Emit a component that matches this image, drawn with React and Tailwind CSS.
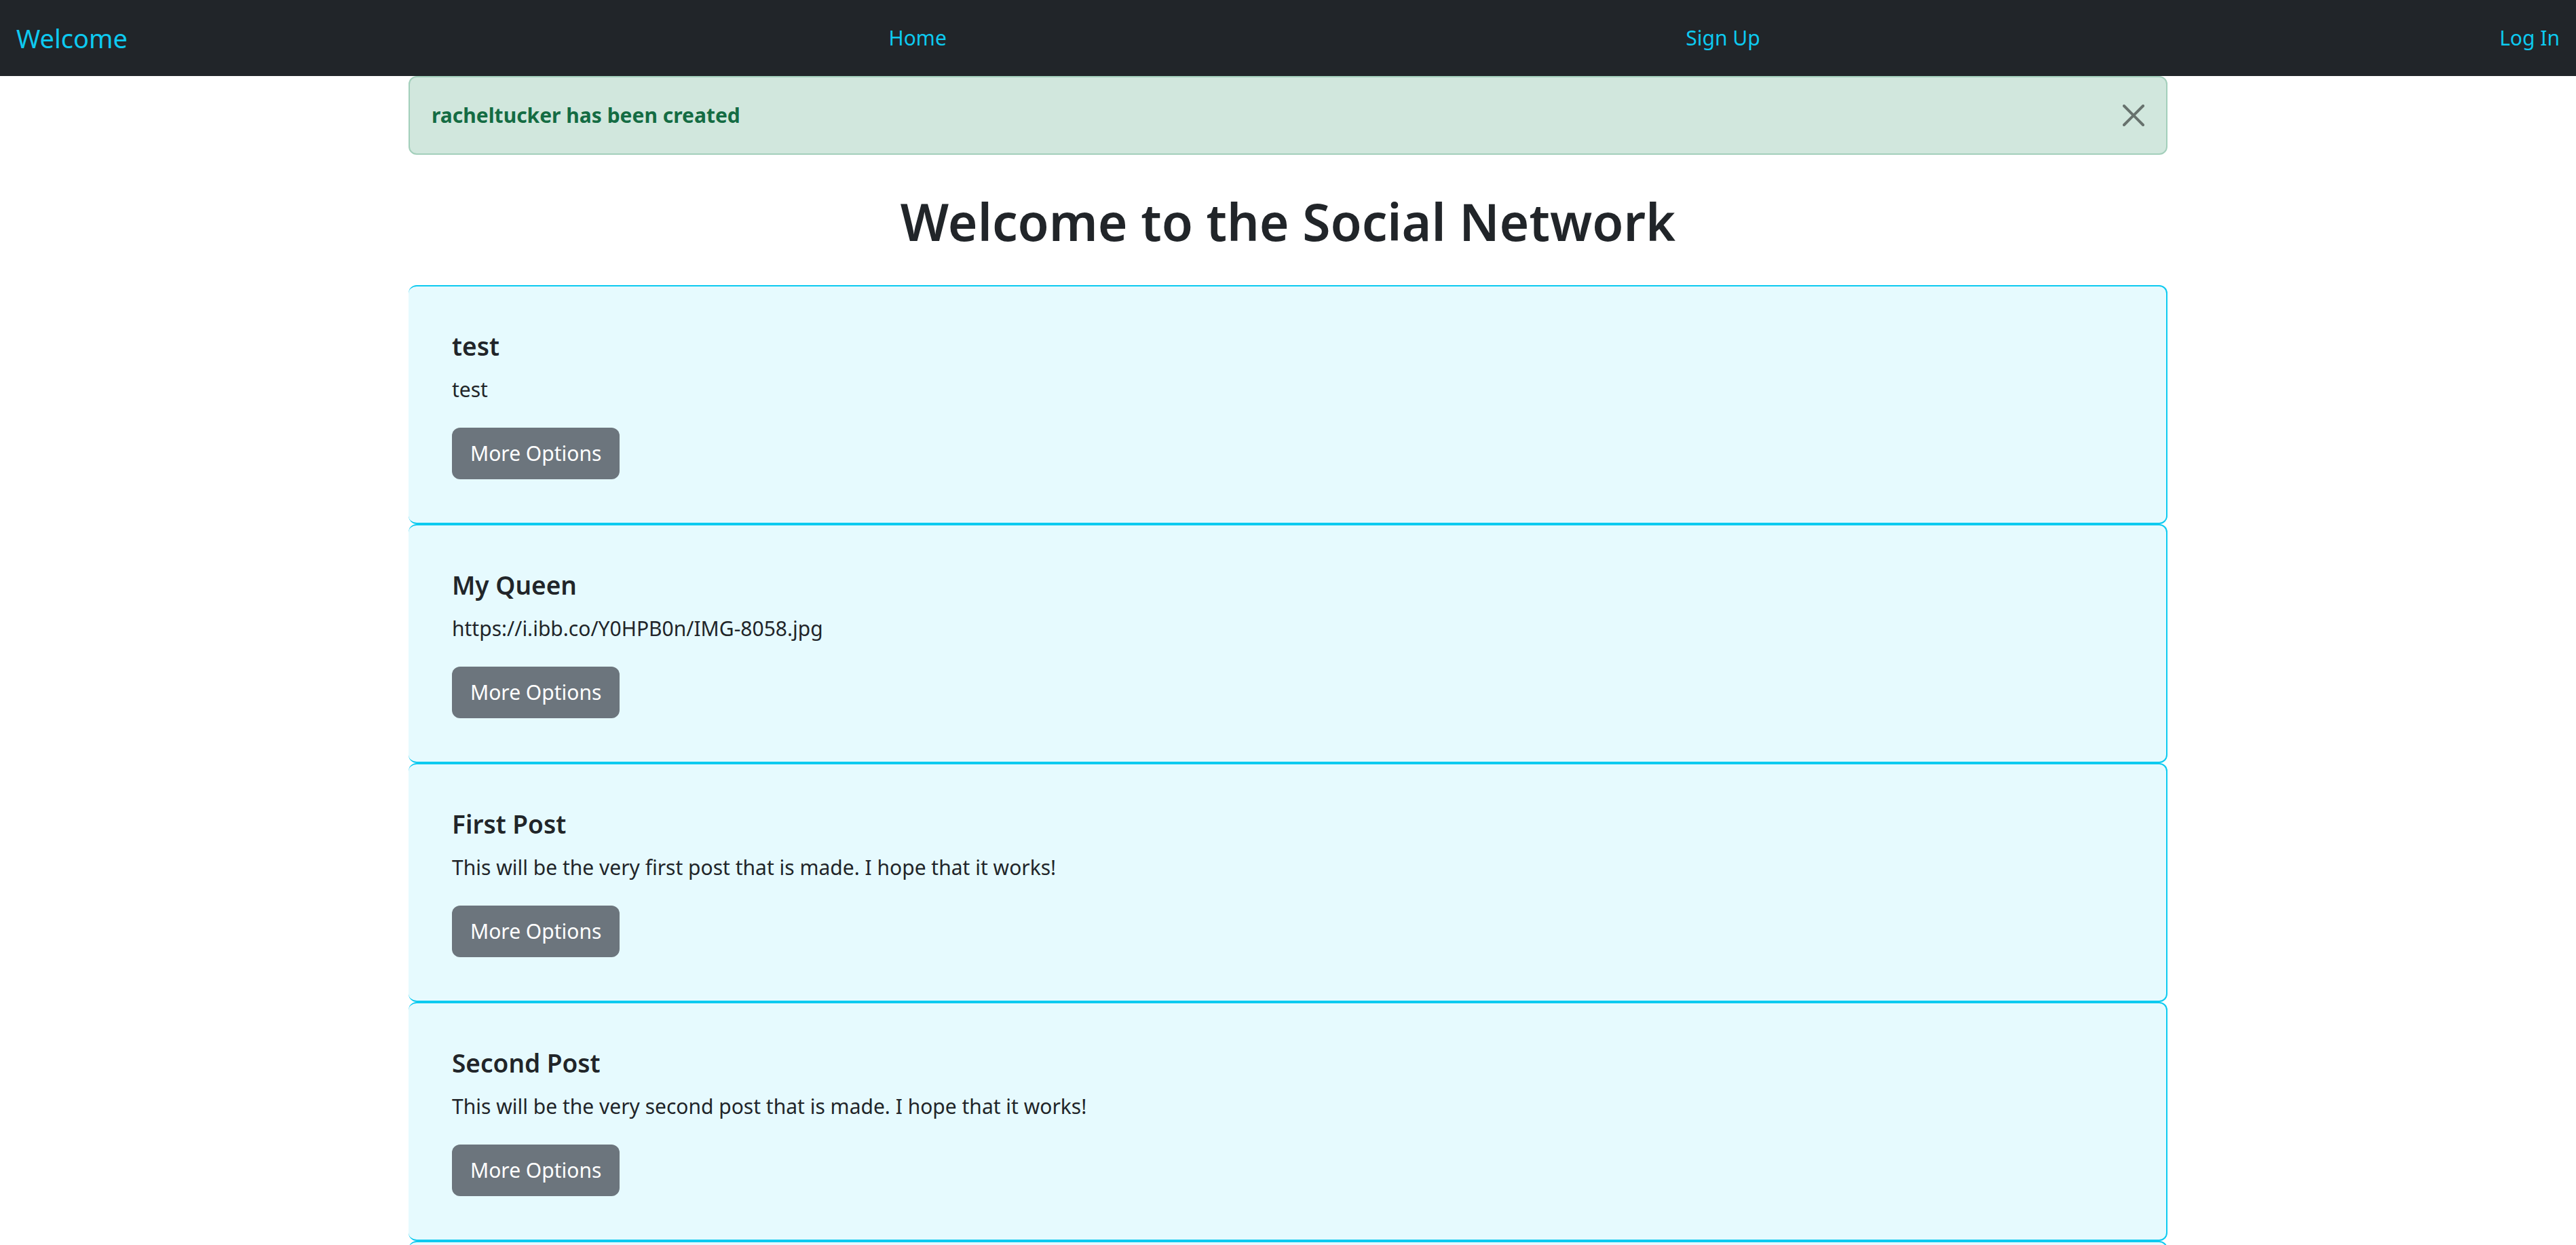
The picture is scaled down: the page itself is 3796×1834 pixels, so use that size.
import React, { useState } from "react";

const POSTS = [
  { title: "test", body: "test" },
  { title: "My Queen", body: "https://i.ibb.co/Y0HPB0n/IMG-8058.jpg" },
  { title: "First Post", body: "This will be the very first post that is made. I hope that it works!" },
  { title: "Second Post", body: "This will be the very second post that is made. I hope that it works!" },
];

const CARD = "rounded-xl border-2 border-l-0 border-[#0dcaf0] bg-[#e6fafe] p-16";

function NavBar() {
  return (
    <nav className="flex h-28 items-center justify-between bg-[#212529] px-6 text-[#0dcaf0]">
      <a href="#welcome" className="mr-8 text-[38px] leading-[60px]">Welcome</a>
      <a href="#home">Home</a>
      <a href="#signup">Sign Up</a>
      <a href="#login">Log In</a>
    </nav>
  );
}

function Alert({ children, onClose }) {
  return (
    <div
      role="alert"
      className="flex items-center justify-between rounded-xl border-2 border-[#a3cfbb] bg-[#d1e7dd] p-8 text-[#146c43]"
    >
      <strong className="font-bold">{children}</strong>
      <button type="button" aria-label="Close" onClick={onClose} className="text-black opacity-50">
        <svg viewBox="0 0 16 16" fill="currentColor" className="size-8">
          <path d="M.293.293a1 1 0 0 1 1.414 0L8 6.586 14.293.293a1 1 0 1 1 1.414 1.414L9.414 8l6.293 6.293a1 1 0 0 1-1.414 1.414L8 9.414l-6.293 6.293a1 1 0 0 1-1.414-1.414L6.586 8 .293 1.707a1 1 0 0 1 0-1.414z" />
        </svg>
      </button>
    </div>
  );
}

function PostCard({ title, body }) {
  return (
    <article className={CARD}>
      <h2 className="mb-4 text-[37px] leading-[48px] font-semibold">{title}</h2>
      <p className="mb-8">{body}</p>
      <button type="button" className="block rounded-xl bg-[#6c757d] px-[27px] py-[14px] text-white">
        More Options
      </button>
    </article>
  );
}

export default function App() {
  const [alertOpen, setAlertOpen] = useState(true);
  return (
    <div className="h-screen overflow-hidden bg-white font-['Noto_Sans','Open_Sans',sans-serif] text-[30px] leading-[48px] text-[#212529]">
      <NavBar />
      <main className="mx-auto max-w-[2640px] px-6">
        {alertOpen && <Alert onClose={() => setAlertOpen(false)}>racheltucker has been created</Alert>}
        <h1 className="mt-[50px] mb-[46px] text-center text-[75px] leading-[96px] font-semibold">
          Welcome to the Social Network
        </h1>
        {POSTS.map((post) => (
          <PostCard key={post.title} title={post.title} body={post.body} />
        ))}
        <article className={CARD} />
      </main>
    </div>
  );
}
